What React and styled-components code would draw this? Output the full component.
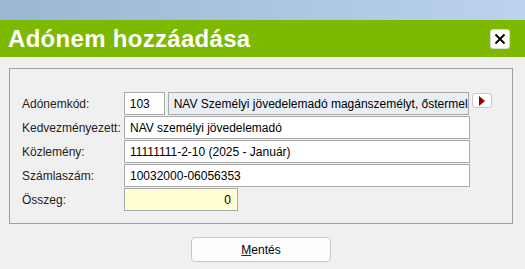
import React from "react";
import styled, { createGlobalStyle } from "styled-components";

const GlobalStyle = createGlobalStyle`
  body {
    margin: 0;
    background: #f0f0f0;
    font-family: "Liberation Sans", Arial, sans-serif;
  }
  * {
    box-sizing: border-box;
  }
`;

const TopBand = styled.div`
  height: 20px;
  background: linear-gradient(to right, #9bb7d4, #bbd3ec);
`;

const Header = styled.div`
  height: 37px;
  background: #7cb900;
  display: flex;
  align-items: center;
  justify-content: space-between;
  padding: 0 15px 0 8px;

  h1 {
    margin: 0;
    color: #fff;
    font-size: 24px;
    font-weight: 700;
    letter-spacing: 0.3px;
  }
`;

const CloseButton = styled.button`
  width: 20px;
  height: 20px;
  padding: 0;
  border: 1px solid #dcdcdc;
  border-radius: 3px;
  background: #fff;
  display: flex;
  align-items: center;
  justify-content: center;
`;

const Panel = styled.div`
  margin: 11px 12px 0 9px;
  border: 1px solid #a0a0a0;
  padding: 23px 20px 12px 12px;
  display: flex;
  flex-direction: column;
  gap: 1px;
`;

const Row = styled.div`
  display: flex;
  align-items: center;
  height: 23px;
`;

const Label = styled.div`
  width: 102px;
  font-size: 12px;
  color: #222;
`;

const Field = styled.div`
  width: ${p => p.w}px;
  height: 23px;
  border: 1px solid #a9a9a9;
  background: ${p => p.bg || "#fff"};
  font-size: 12px;
  color: #000;
  display: flex;
  align-items: center;
  justify-content: ${p => (p.right ? "flex-end" : "flex-start")};
  padding: 0 6px 0 5px;
  white-space: nowrap;
  overflow: hidden;
  margin-right: ${p => p.gap || 0}px;
`;

const ArrowButton = styled.button`
  width: 20px;
  height: 15px;
  margin-left: 3px;
  align-self: flex-start;
  margin-top: 1px;
  padding: 0;
  border: 1px solid #c8c8c8;
  border-radius: 3px;
  background: #fff;
  display: flex;
  align-items: center;
  justify-content: center;
`;

const Footer = styled.div`
  display: flex;
  justify-content: center;
  padding: 13px 12px 0 9px;
`;

const SaveButton = styled.button`
  width: 140px;
  height: 25px;
  border: 1px solid #c8c8c8;
  border-radius: 4px;
  background: #fdfdfd;
  font-family: "Liberation Sans", Arial, sans-serif;
  font-size: 12px;
  color: #000;

  u {
    text-decoration-color: #1a1a8a;
  }
`;

const App = () => {
  return (
    <div>
      <GlobalStyle />
      <TopBand />
      <Header>
        <h1>Adónem hozzáadása</h1>
        <CloseButton>
          <svg width="14" height="14" viewBox="0 0 14 14">
            <path d="M2.5 2.5 L11.5 11.5 M11.5 2.5 L2.5 11.5" stroke="#000" strokeWidth="1.8" />
          </svg>
        </CloseButton>
      </Header>
      <Panel>
        <Row>
          <Label>Adónemkód:</Label>
          <Field w={41} gap={3}>103</Field>
          <Field w={302} bg="#e9eef5">
            NAV Személyi jövedelemadó magánszemélyt, őstermelőt terhelő
          </Field>
          <ArrowButton>
            <svg width="8" height="10" viewBox="0 0 8 10">
              <path d="M1 0 L7 5 L1 10 Z" fill="#8b0000" />
            </svg>
          </ArrowButton>
        </Row>
        <Row>
          <Label>Kedvezményezett:</Label>
          <Field w={346}>NAV személyi jövedelemadó</Field>
        </Row>
        <Row>
          <Label>Közlemény:</Label>
          <Field w={346}>11111111-2-10 (2025 - Január)</Field>
        </Row>
        <Row>
          <Label>Számlaszám:</Label>
          <Field w={346}>10032000-06056353</Field>
        </Row>
        <Row>
          <Label>Összeg:</Label>
          <Field w={114} bg="#ffffd2" right>
            0
          </Field>
        </Row>
      </Panel>
      <Footer>
        <SaveButton>
          <u>M</u>entés
        </SaveButton>
      </Footer>
    </div>
  );
};

export default App;
